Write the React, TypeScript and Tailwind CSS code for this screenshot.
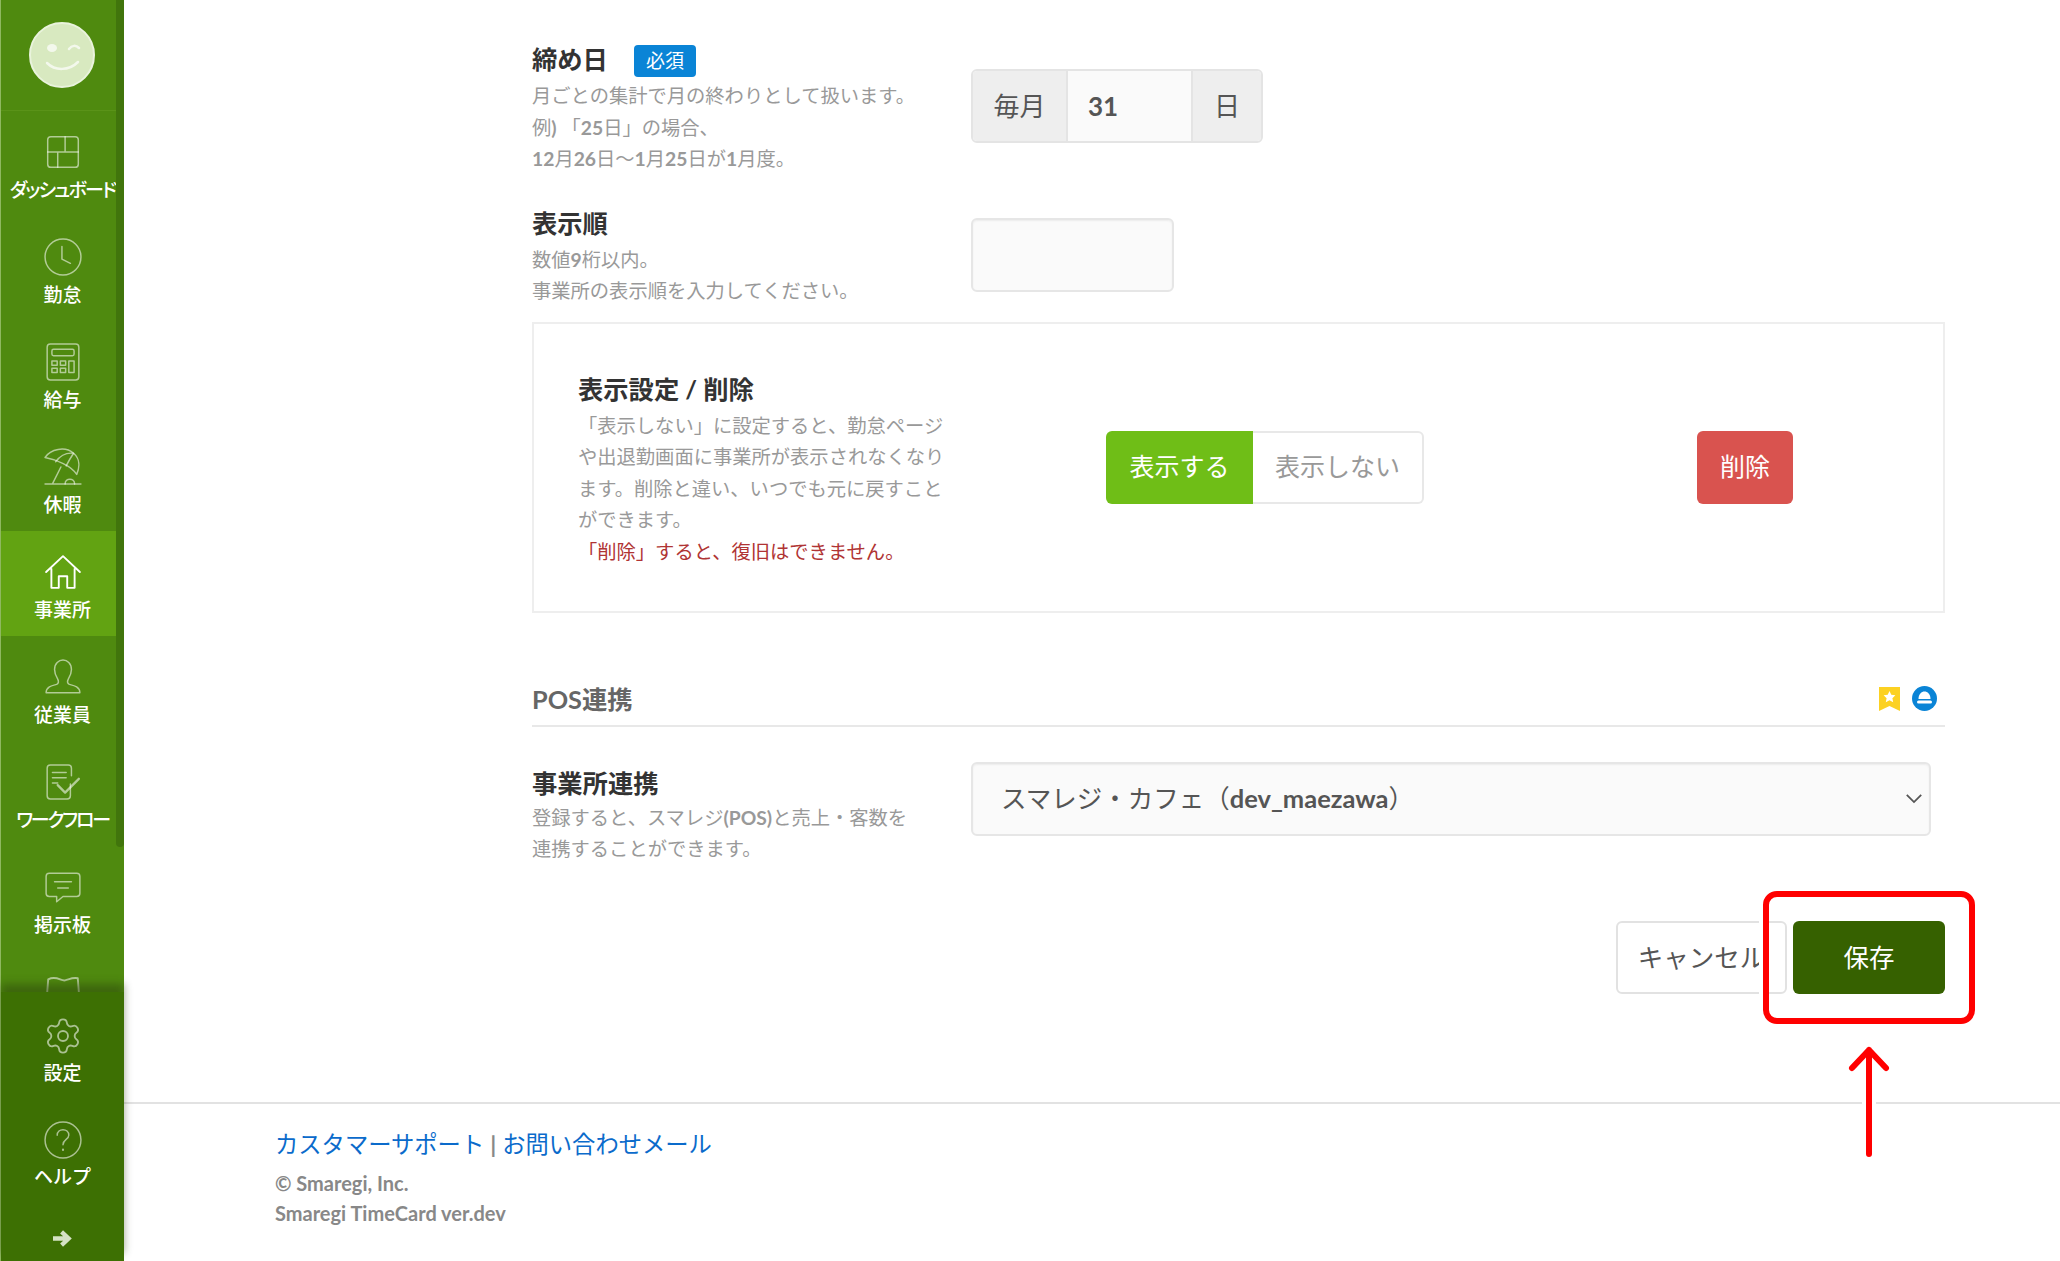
import type { ReactNode } from "react";
import { Settings } from "lucide-react";

const Lat = ({ children }: { children: ReactNode }) => <span className="font-bold">{children}</span>;

function NavIcon({ children }: { children: ReactNode }) {
  return (
    <svg viewBox="0 0 36 36" className="w-[38px] h-[38px]" fill="none" stroke="currentColor" strokeWidth="1.4" strokeLinecap="round" strokeLinejoin="round">
      {children}
    </svg>
  );
}

type Item = { label?: string; icon: ReactNode; cls?: string; active?: boolean };

const navItems: Item[] = [
  {
    label: "ダッシュボード",
    cls: "text-[19px] tracking-[-1.8px] [font-feature-settings:'palt']",
    icon: (
      <>
        <rect x="3.5" y="3.5" width="29" height="29" rx="3" />
        <path d="M3.5 18h29M20 3.5V18M13 18v14.500" />
      </>
    ),
  },
  {
    label: "勤怠",
    icon: (
      <>
        <circle cx="18" cy="18" r="17" />
        <path d="M17 8v12l8 4" />
      </>
    ),
  },
  {
    label: "給与",
    icon: (
      <>
        <rect x="3" y="1" width="30" height="34" rx="3" />
        <rect x="7.500" y="6" width="21" height="6" rx="1.500" />
        <path d="M7.500 17h5v4h-5zM15.500 17h5v4h-5zM23.500 17h5v11h-5zM7.500 24h5v4h-5zM15.500 24h5v4h-5z" />
      </>
    ),
  },
  {
    label: "休暇",
    icon: (
      <>
        <path d="M1 34h34M8 34l8-16" />
        <path d="M1 9C6 1 20-2 28 5c6 5 6 13 3 20C26 17 12 11 1 9z" />
        <path d="M11 13c3-4 9-9 17-8M21 17c2-4 5-9 7-12" />
        <path d="M20 34c0-6 9-6 9 0" />
      </>
    ),
  },
  {
    label: "事業所",
    active: true,
    icon: <path d="M2 18L18 3l16 15M7 15v18h7V22h8v11h7V15" strokeWidth="1.800" />,
  },
  {
    label: "従業員",
    icon: <path d="M2 33c0-6 6-7 10-8 2-1 2-3 1-5-2-3-3-6-3-9 0-6 4-9 8-9s8 3 8 9c0 3-1 6-3 9-1 2-1 4 1 5 4 1 10 2 10 8z" />,
  },
  {
    label: "ワークフロー",
    cls: "text-[19px] tracking-[-2.2px] [font-feature-settings:'palt']",
    icon: (
      <>
        <path d="M25 20v11a3 3 0 0 1-3 3H6a3 3 0 0 1-3-3V5a3 3 0 0 1 3-3h17a3 3 0 0 1 3 3v7" />
        <path d="M8 9h13M8 14h13M8 19h5" />
        <path d="M13 21l7 7 13-13" strokeWidth="2.200" />
      </>
    ),
  },
  {
    label: "掲示板",
    icon: (
      <>
        <path d="M5 5h26a3 3 0 0 1 3 3v16a3 3 0 0 1-3 3H18l-6 5v-5H5a3 3 0 0 1-3-3V8a3 3 0 0 1 3-3z" />
        <path d="M10 13h16M13 19h10" />
      </>
    ),
  },
  // only the top of this one shows above the bottom panel
  {
    icon: <path d="M4 6c8-4 12 2 16 1s7-3 12-2l2 26H2z" strokeWidth="1.800" />,
  },
];

function NavItem({ item }: { item: Item }) {
  return (
    <div className={`h-[105px] pt-[22px] flex flex-col items-center ${item.active ? "bg-[#62a312] text-white" : "text-[#ffffff90]"}`}>
      <NavIcon>{item.icon}</NavIcon>
      {item.label && (
        <span className={`mt-[6.5px] leading-[24px] font-medium text-white whitespace-nowrap ${item.cls ?? "text-[19px]"}`}>{item.label}</span>
      )}
    </div>
  );
}

function Sidebar() {
  return (
    <aside className="relative w-[124px] h-full shrink-0 flex flex-col bg-[#4f8a0f] border-l border-[#8fb85f]">
      <div className="h-[111px] shrink-0 flex items-center justify-center border-b border-[#5a9318] pr-[2px]">
        <svg viewBox="0 0 66 66" className="w-[66px] h-[66px]">
          <circle cx="33" cy="33" r="32" fill="#d8e9c0" stroke="#e9f3dc" strokeWidth="2" />
          <ellipse cx="23" cy="26" rx="5" ry="4" fill="#f3f8ec" />
          <path d="M40 27c3-4 7-4 10-1" fill="none" stroke="#f3f8ec" strokeWidth="2.500" strokeLinecap="round" />
          <path d="M18 41c8 8 22 8 31-1" fill="none" stroke="#f3f8ec" strokeWidth="2.500" strokeLinecap="round" />
        </svg>
      </div>
      <nav className="flex-1 min-h-0 overflow-hidden">
        {navItems.map((item, i) => (
          <NavItem key={i} item={item} />
        ))}
      </nav>
      {/* scrollbar thumb */}
      <div className="absolute right-0 top-0 w-[8px] h-[847px] bg-[#41750c] rounded-b" />
      <div className="relative h-[269px] shrink-0 bg-[#3d7003] pt-[24px] shadow-[0_-8px_8px_rgba(40,60,10,0.45)]">
        <div className="h-[105px] flex flex-col items-center text-[#ffffff90]">
          <Settings className="w-[40px] h-[40px]" strokeWidth={1.1} />
          <span className="mt-[5px] leading-[24px] text-[19px] font-medium text-white">設定</span>
        </div>
        <div className="h-[105px] flex flex-col items-center text-[#ffffff90]">
          <NavIcon>
            <circle cx="18" cy="18" r="17" />
            <path d="M12.500 13.500c0-7 11-7 11 0 0 4-5.500 4-5.500 9" />
            <path d="M18 27v.5" strokeWidth="2" />
          </NavIcon>
          <span className="mt-[6px] leading-[24px] text-[19px] font-medium text-white">ヘルプ</span>
        </div>
        <div className="mt-[3px] flex justify-center">
          <svg viewBox="0 0 22 20" className="w-[21px] h-[19px]" fill="none" stroke="#d5e2c5" strokeWidth="4.500">
            <path d="M1 10h16M10 3l7.500 7-7.500 7" />
          </svg>
        </div>
      </div>
    </aside>
  );
}

const heading = "text-[25.3px] leading-[32px] font-bold text-[#333]";
const desc = "text-[19.3px] leading-[31.5px] text-[#999]";
const field = "border-2 border-[#e6e6e6] rounded-[6px] bg-[#fafafa] shadow-[inset_0_1px_2px_rgba(0,0,0,0.06)]";

function Form() {
  return (
    <div className="pl-[408px] pr-[115px] pt-[43px]">
      <div className="flex">
        <div className="w-[439px] shrink-0">
          <div className="flex items-center gap-[26px]">
            <h2 className={heading}>締め日</h2>
            <span className="translate-y-[2px] w-[62px] h-[32px] flex items-center justify-center rounded-[4px] bg-[#0a84d6] text-white text-[19px]">必須</span>
          </div>
          <p className={`mt-[5px] ${desc}`}>
            月ごとの集計で月の終わりとして扱います。
            <br />
            例<Lat>)</Lat> 「<Lat>25</Lat>日」の場合、
            <br />
            <Lat>12</Lat>月<Lat>26</Lat>日〜<Lat>1</Lat>月<Lat>25</Lat>日が<Lat>1</Lat>月度。
          </p>
        </div>
        <div className="mt-[26px] flex w-[292px] h-[74px] border-2 border-[#e4e4e4] rounded-[6px] overflow-hidden text-[26px] text-[#555]">
          <span className="w-[95px] flex items-center justify-center bg-[#eeeeee] border-r-2 border-[#e4e4e4]">毎月</span>
          <span className="w-[123px] flex items-center pl-[20px] bg-[#fafafa] font-bold">31</span>
          <span className="flex-1 flex items-center justify-center bg-[#eeeeee] border-l-2 border-[#e4e4e4]">日</span>
        </div>
      </div>

      <div className="mt-[32px] flex">
        <div className="w-[439px] shrink-0">
          <h2 className={heading}>表示順</h2>
          <p className={`mt-[5px] ${desc}`}>
            数値<Lat>9</Lat>桁以内。
            <br />
            事業所の表示順を入力してください。
          </p>
        </div>
        <div className={`mt-[11px] w-[203px] h-[74px] ${field}`} />
      </div>

      <div className="mt-[15px] h-[291px] flex items-center border-2 border-[#eeeeee] pl-[44px]">
        <div className="mt-[6px] w-[528px] shrink-0">
          <h2 className={heading}>
            表示設定 <Lat>/</Lat> 削除
          </h2>
          <p className={`mt-[5px] ${desc}`}>
            「表示しない」に設定すると、勤怠ページ
            <br />
            や出退勤画面に事業所が表示されなくなり
            <br />
            ます。削除と違い、いつでも元に戻すこと
            <br />
            ができます。
            <br />
            <span className="text-[#b03434]">「削除」すると、復旧はできません。</span>
          </p>
        </div>
        <div className="flex h-[73px] w-[318px] text-[25px]">
          <span className="w-[147px] flex items-center justify-center rounded-l-[6px] bg-[#6fbe17] text-white">表示する</span>
          <span className="flex-1 flex items-center justify-center rounded-r-[6px] border-2 border-l-0 border-[#e8e8e8] text-[#999]">表示しない</span>
        </div>
        <span className="ml-[273px] w-[96px] h-[73px] flex items-center justify-center rounded-[6px] bg-[#d9534f] text-white text-[25px]">削除</span>
      </div>

      <div className="mt-[70px] pb-[10px] pr-[8px] flex items-center justify-between border-b-2 border-[#e8e8e8]">
        <h2 className="text-[25.3px] leading-[32px] font-bold text-[#666]">POS連携</h2>
        <div className="flex items-center gap-[12px]">
          <svg viewBox="0 0 21 24" className="w-[21px] h-[24px]">
            <path d="M0 0h21v24l-10.500-5L0 24z" fill="#fcd122" />
            <path d="M10.500 4l1.800 3.800 4.100.5-3 2.900.8 4.100-3.700-2-3.700 2 .8-4.100-3-2.900 4.100-.5z" fill="#fff" />
          </svg>
          <svg viewBox="0 0 25 25" className="w-[25px] h-[25px]">
            <circle cx="12.500" cy="12.500" r="12.500" fill="#0a84d6" />
            <path d="M6.500 13c0-10 12-10 12 0z" fill="#fff" />
            <rect x="5" y="14.500" width="15" height="3" rx="1.500" fill="#fff" />
          </svg>
        </div>
      </div>

      <div className="mt-[40px] flex">
        <div className="w-[439px] shrink-0">
          <h2 className={heading}>事業所連携</h2>
          <p className={`mt-[3px] ${desc}`}>
            登録すると、スマレジ<Lat>(POS)</Lat>と売上・客数を
            <br />
            連携することができます。
          </p>
        </div>
        <div className={`-mt-[5px] w-[960px] h-[74px] flex items-center justify-between pl-[28px] pr-[6px] text-[25.5px] text-[#555] ${field}`}>
          <span>
            スマレジ・カフェ（<Lat>dev_maezawa</Lat>）
          </span>
          <svg viewBox="0 0 20 12" className="w-[18px] h-[11px]" fill="none" stroke="#555" strokeWidth="2">
            <path d="M2 2l8 8 8-8" />
          </svg>
        </div>
      </div>

      <div className="mt-[56px] flex justify-end gap-[6px] text-[25.5px]">
        <span className="w-[171px] h-[73px] flex items-center justify-center rounded-[6px] border-2 border-[#e2e2e2] text-[#555]">キャンセル</span>
        <span className="w-[152px] h-[73px] flex items-center justify-center rounded-[6px] bg-[#366100] text-white">保存</span>
      </div>
    </div>
  );
}

function Footer() {
  return (
    <footer className="mt-[108px] border-t-2 border-[#e2e2e2] pt-[24px] pl-[151px]">
      <p className="text-[23.3px] leading-[32px] text-[#0b6bcb]">
        カスタマーサポート <span className="font-bold text-[#888]">|</span> お問い合わせメール
      </p>
      <p className="mt-[8px] text-[20px] leading-[30px] font-bold text-[#888]">
        © Smaregi, Inc.
        <br />
        Smaregi TimeCard ver.dev
      </p>
    </footer>
  );
}

export default function App() {
  return (
    <div className="relative flex w-[2060px] h-[1261px] overflow-hidden bg-white [text-spacing-trim:space-all] [font-family:Lato,'Noto_Sans_CJK_JP',sans-serif]">
      <Sidebar />
      <main className="flex-1 min-w-0">
        <Form />
        <Footer />
      </main>
      {/* red annotation over the save button */}
      <div className="absolute left-[1763px] top-[891px] w-[212px] h-[133px] rounded-[14px] border-[6px] border-[#ff0000] shadow-[0_0_0_4px_#fff]" />
      <svg className="absolute left-[1843px] top-[1040px] w-[52px] h-[124px]" viewBox="0 0 52 124" fill="none" strokeLinecap="round" strokeLinejoin="round">
        <path d="M26 10v104" stroke="#fff" strokeWidth="14" />
        <path d="M26 10v104M9 28l17-18 17 18" stroke="#ff0000" strokeWidth="6" />
      </svg>
    </div>
  );
}
